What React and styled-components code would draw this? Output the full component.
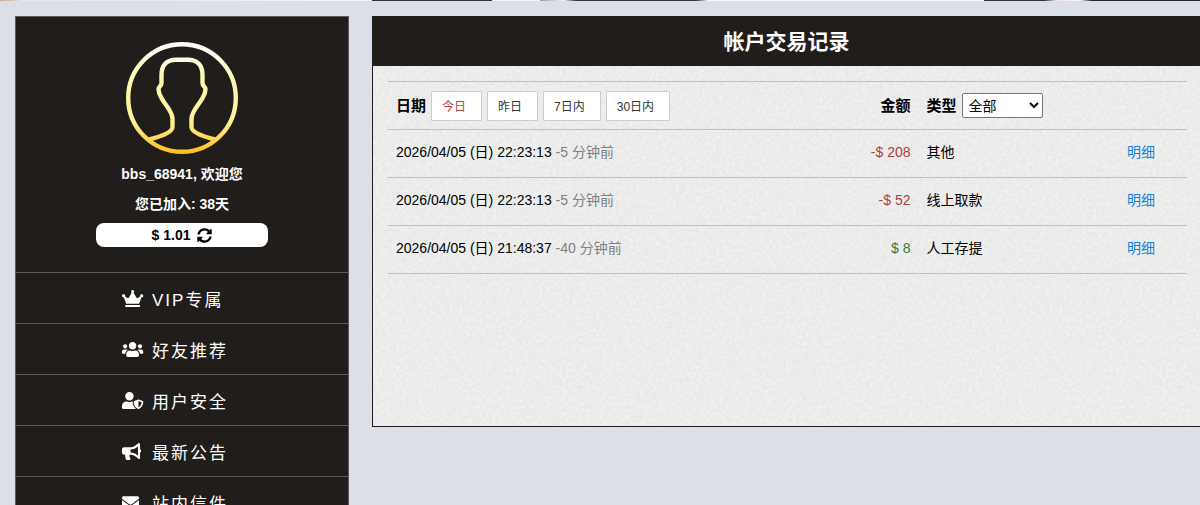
import React, { useState } from "react";
import styled, { createGlobalStyle } from "styled-components";
import { FaCrown, FaUsers, FaUserShield, FaBullhorn, FaEnvelope, FaSyncAlt } from "react-icons/fa";

const paper = encodeURIComponent(
  `<svg xmlns="http://www.w3.org/2000/svg" width="300" height="300"><filter id="n" x="0" y="0" width="1" height="1" color-interpolation-filters="sRGB"><feTurbulence type="fractalNoise" baseFrequency="0.3" numOctaves="2" stitchTiles="stitch"/><feColorMatrix values="0.07 0 0 0 0.89  0.07 0 0 0 0.89  0.07 0 0 0 0.89  0 0 0 0 1"/></filter><rect width="300" height="300" filter="url(#n)"/></svg>`
);

const GlobalStyle = createGlobalStyle`
  * {
    box-sizing: border-box;
  }
  html {
    overflow-x: hidden;
  }
  body {
    margin: 0;
    background: #dbdfe7;
    font-family: "Liberation Sans", "Noto Sans CJK SC", sans-serif;
    font-size: 14px;
    color: #000;
  }
  button, select {
    font-family: inherit;
  }
`;

const Banner = styled.div`
  height: 1px;
  background: linear-gradient(
    to right,
    #c9a596 0, #e8e4ea 2%, #f4f4fa 31%,
    #35303b 31%, #35303b 41%, #f4f4fa 41%, #f4f4fa 45%,
    #9a98ab 45%, #f4f4fa 47%, #35303b 48%, #35303b 58%,
    #f8f8fb 59%, #f8f8fb 82%, #35303b 82%, #35303b 87%,
    #f1e3e3 88%, #f8f8fb 90%, #2b2529 91%, #2b2529 100%
  );
`;

const Page = styled.div`
  display: flex;
  align-items: flex-start;
  gap: 23px;
  padding: 15px 0 0 15px;
`;

const Sidebar = styled.aside`
  flex: 0 0 334px;
  background: #211d1a;
  border: 1px solid #5d5b5a;
  color: #fff;
`;

const Profile = styled.section`
  display: flex;
  flex-direction: column;
  align-items: center;
  padding: 24px 0 25px;
  font-weight: bold;
  line-height: 30px;
`;

const Avatar = styled.svg`
  width: 114px;
  height: 114px;
  margin-bottom: 4px;
`;

const Balance = styled.button`
  display: flex;
  align-items: center;
  justify-content: center;
  gap: 7px;
  width: 172px;
  height: 24px;
  margin-top: 4px;
  padding: 0;
  border: none;
  border-radius: 8px;
  background: #fff;
  color: #000;
  font-size: 14px;
  font-weight: bold;
  cursor: pointer;
`;

const MenuLink = styled.a`
  display: flex;
  align-items: center;
  gap: 8px;
  height: 51px;
  padding: 0 0 0 106px;
  border-top: 1px solid #5d5b5a;
  color: #fff;
  font-size: 17px;
  letter-spacing: 2px;
  text-decoration: none;
  &:hover {
    background: #38322d;
  }
`;

const MenuIcon = styled.span`
  display: flex;
  svg {
    width: 22px;
    height: 17px;
  }
`;

const Panel = styled.main`
  flex: 1;
  min-width: 0;
  border: 1px solid #211d1a;
  border-width: 0 0 1px 1px;
  background: #ececec url("data:image/svg+xml,${paper}");
`;

const Title = styled.h1`
  margin: 0;
  padding-top: 2px;
  background: #211d1a;
  color: #fff;
  font-size: 21px;
  line-height: 48px;
  text-align: center;
`;

const PanelBody = styled.div`
  min-height: 360px;
  padding: 15px 13px 15px 15px;
`;

const Table = styled.table`
  width: 100%;
  table-layout: fixed;
  border-collapse: collapse;
  border-top: 1px solid #bfbfbf;
  line-height: 20px;
`;

const Row = styled.tr`
  height: 48px;
  border-bottom: 1px solid #bfbfbf;
`;

const Th = styled.th`
  width: ${props => props.$width};
  padding: 0 8px;
  font-size: 15px;
  text-align: ${props => props.$align || "left"};
`;

const Td = styled.td`
  padding: 0 8px 3px;
  color: ${props => props.$color || "#000"};
  text-align: ${props => props.$align || "left"};
  white-space: nowrap;
`;

const Filters = styled.div`
  display: flex;
  align-items: center;
  gap: 5px;
`;

const RangeButton = styled.button`
  height: 30px;
  padding: 0 15px 0 10px;
  border: 1px solid #ccc;
  border-radius: 1px;
  background: #fff;
  color: ${props => props.$active ? "#b04545" : "#333"};
  font-size: 12px;
  cursor: pointer;
`;

const TypeSelect = styled.select`
  width: 81px;
  height: 25px;
  padding: 0 2px;
  border: 1px solid #767676;
  border-radius: 2px;
  background: #fff;
  color: #000;
  font-size: 14px;
`;

const Ago = styled.span`
  color: #808080;
`;

const DetailLink = styled.a`
  color: #1381e0;
  text-decoration: none;
`;

const menu = [
  { label: "VIP专属", icon: FaCrown },
  { label: "好友推荐", icon: FaUsers },
  { label: "用户安全", icon: FaUserShield },
  { label: "最新公告", icon: FaBullhorn },
  { label: "站内信件", icon: FaEnvelope },
];

const ranges = ["今日", "昨日", "7日内", "30日内"];

const types = ["全部", "其他", "线上取款", "人工存提"];

const records = [
  { date: "2026/04/05 (日) 22:23:13", ago: "-5 分钟前", amount: -208, type: "其他" },
  { date: "2026/04/05 (日) 22:23:13", ago: "-5 分钟前", amount: -52, type: "线上取款" },
  { date: "2026/04/05 (日) 21:48:37", ago: "-40 分钟前", amount: 8, type: "人工存提" },
];

const UserAvatar = () => (
  <Avatar viewBox="0 0 114 114" fill="none" stroke="url(#gold)" strokeWidth="4.4" aria-hidden="true">
    <defs>
      <linearGradient id="gold" gradientUnits="userSpaceOnUse" x1="0" y1="0" x2="0" y2="114">
        <stop offset="0.02" stopColor="#fff" />
        <stop offset="0.1" stopColor="#fcfcf4" />
        <stop offset="0.3" stopColor="#fbf8b4" />
        <stop offset="0.7" stopColor="#fdf39a" />
        <stop offset="0.88" stopColor="#fdd24b" />
        <stop offset="1" stopColor="#fdbc10" />
      </linearGradient>
    </defs>
    <circle cx="57" cy="57" r="53.8" />
    <path
      strokeLinejoin="round"
      d="M24 98.500C34 96 47.500 92 47.500 86V78C47.500 70 40 64 36.500 57C34.500 54 33.500 51 33.500 48C33.500 46 36.500 45 36.500 42V34C36.500 24 42 18.700 51 18.700H63C72 18.700 77.500 24 77.500 34V42C77.500 45 80.500 46 80.500 48C80.500 51 79.500 54 77.500 57C74 64 66.500 70 66.500 78V86C66.500 92 80 96 90 98.500"
    />
  </Avatar>
);

const App = () => {
  const [range, setRange] = useState("今日");
  const [type, setType] = useState("全部");

  const visible = records.filter(record => type === "全部" || record.type === type);

  return (
    <>
      <GlobalStyle />
      <Banner />
      <Page>
        <Sidebar>
          <Profile>
            <UserAvatar />
            <div>bbs_68941, 欢迎您</div>
            <div>您已加入: 38天</div>
            <Balance>
              $ 1.01 <FaSyncAlt size={15} />
            </Balance>
          </Profile>
          <nav>
            {menu.map(({ label, icon: Icon }) => (
              <MenuLink key={label} href="#">
                <MenuIcon><Icon preserveAspectRatio="xMinYMid" /></MenuIcon>
                {label}
              </MenuLink>
            ))}
          </nav>
        </Sidebar>
        <Panel>
          <Title>帐户交易记录</Title>
          <PanelBody>
            <Table>
              <thead>
                <Row>
                  <Th $width="50%">
                    <Filters>
                      日期
                      {ranges.map(item => (
                        <RangeButton key={item} $active={item === range} onClick={() => setRange(item)}>
                          {item}
                        </RangeButton>
                      ))}
                    </Filters>
                  </Th>
                  <Th $width="16.4%" $align="right">金额</Th>
                  <Th $width="22.1%">
                    <Filters>
                      <label htmlFor="type">类型</label>
                      <TypeSelect id="type" value={type} onChange={e => setType(e.target.value)}>
                        {types.map(item => <option key={item}>{item}</option>)}
                      </TypeSelect>
                    </Filters>
                  </Th>
                  <Th $width="11.5%" />
                </Row>
              </thead>
              <tbody>
                {visible.map((record, index) => (
                  <Row key={index}>
                    <Td>{record.date} <Ago>{record.ago}</Ago></Td>
                    <Td $align="right" $color={record.amount < 0 ? "#a94442" : "#3c763d"}>
                      {record.amount < 0 ? "-" : ""}$ {Math.abs(record.amount)}
                    </Td>
                    <Td>{record.type}</Td>
                    <Td $align="center"><DetailLink href="#">明细</DetailLink></Td>
                  </Row>
                ))}
              </tbody>
            </Table>
          </PanelBody>
        </Panel>
      </Page>
    </>
  );
};

export default App;
